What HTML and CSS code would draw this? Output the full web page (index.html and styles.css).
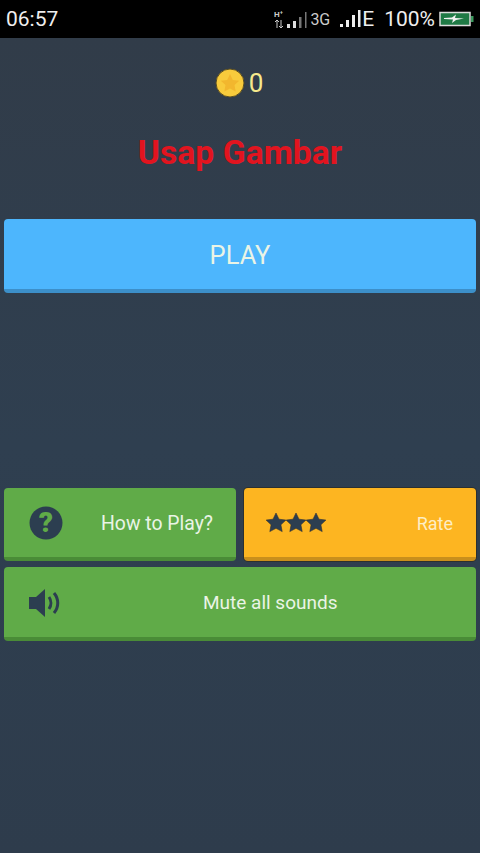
FILE: index.html
```html
<!DOCTYPE html>
<html lang="en">
<head>
  <meta charset="UTF-8">
  <meta name="viewport" content="width=device-width, initial-scale=1.0">
  <title>Usap Gambar</title>
  <link rel="stylesheet" href="styles.css">
</head>
<body>
  <div class="status-bar">
    <span class="clock">06:57</span>
    <div class="status-icons">
      <svg class="sim-signal" width="35" height="20" viewBox="0 0 35 20">
        <text x="0" y="8" class="tiny">H⁺</text>
        <path d="M3 11v8M1 13l2-2 2 2M7 11v8M5 17l2 2 2-2" stroke="#ccc" stroke-width="1" fill="none"/>
        <rect x="13" y="15" width="3" height="4" fill="#ddd"/>
        <rect x="19" y="12" width="3" height="7" fill="#ddd"/>
        <rect x="25" y="8" width="2.5" height="11" fill="#777"/>
        <rect x="31" y="3" width="1.5" height="16" fill="#777"/>
      </svg>
      <span class="net-label net-3g">3G</span>
      <svg class="sim-signal-two" width="22" height="20" viewBox="0 0 22 20">
        <rect x="1" y="15" width="3" height="3" fill="#eee"/>
        <rect x="7" y="11" width="3" height="7" fill="#eee"/>
        <rect x="13" y="6" width="3" height="12" fill="#eee"/>
        <rect x="19" y="1" width="2.500" height="17" fill="#eee"/>
      </svg>
      <span class="net-label net-e">E</span>
      <span class="battery-pct">100%</span>
      <svg class="battery" width="35" height="16" viewBox="0 0 35 16">
        <rect x="1" y="1.5" width="30" height="13" fill="#1f7a45" stroke="#ddd" stroke-width="1.5"/>
        <rect x="32" y="5" width="2.5" height="6" fill="#3c9a5f"/>
        <path d="M5 7l8-.5 4-3-1 3.500 9 .5-8 1.500-4 3 1-3.500-9-.5z" fill="#f2f2f2"/>
      </svg>
    </div>
  </div>

  <div class="main">
    <div class="coins">
      <svg class="coin" width="30" height="30" viewBox="0 0 30 30">
        <circle cx="15" cy="15" r="14" fill="#f8cb3c" stroke="#5c4f22" stroke-width="1"/>
        <path d="M15 6l2.800 5.900 6.400.8-4.700 4.400 1.200 6.400-5.700-3.100-5.700 3.100 1.200-6.400-4.700-4.400 6.400-.8z" fill="#f2b72e"/>
      </svg>
      <span class="coin-count">0</span>
    </div>

    <h1 class="title">Usap Gambar</h1>

    <button class="btn btn-blue btn-play">PLAY</button>

    <div class="menu">
      <button class="btn btn-green menu-btn">
        <svg width="36" height="36" viewBox="0 0 36 36">
          <circle cx="18" cy="18" r="16.500" fill="#2c3e50"/>
          <text x="18" y="27" text-anchor="middle" class="help-mark">?</text>
        </svg>
        <span class="help-label">How to Play?</span>
      </button>
      <button class="btn btn-yellow menu-btn">
        <svg width="62" height="22" viewBox="0 0 62 22">
          <path id="rate-star" d="M11 1l3 6.200 6.900.9-5 4.700 1.300 6.800-6.200-3.300-6.200 3.300 1.300-6.800-5-4.700 6.900-.9z" fill="#2c3e50" stroke="#333" stroke-width="0.600"/>
          <use href="#rate-star" x="20"/>
          <use href="#rate-star" x="40"/>
        </svg>
        <span class="rate-label">Rate</span>
      </button>
      <button class="btn btn-green menu-btn menu-wide">
        <svg width="34" height="32" viewBox="0 0 34 32">
          <path d="M1 10h7l9-8v28l-9-8H1z" fill="#2c3e50"/>
          <path d="M21 10c2.500 3.500 2.500 8.500 0 12M26 6c5 6 5 14 0 20" fill="none" stroke="#2c3e50" stroke-width="3"/>
        </svg>
        <span class="mute-label">Mute all sounds</span>
      </button>
    </div>
  </div>
</body>
</html>
```

FILE: styles.css
```css
* {
  box-sizing: border-box;
}
html, body {
  height: 100%;
}
body {
  margin: 0;
  background: #2f3d4c;
  font-family: Roboto, Arial, sans-serif;
  display: flex;
  flex-direction: column;
}
.status-bar {
  height: 38px;
  background: #000;
  color: #eee;
  display: flex;
  align-items: center;
  justify-content: space-between;
  padding: 0 6px;
  flex-shrink: 0;
}
.clock {
  font-size: 21px;
}
.status-icons {
  display: flex;
  align-items: center;
}
.tiny {
  font-size: 8px;
  font-weight: bold;
  fill: #ccc;
}
.net-label {
  font-size: 16px;
}
.net-3g {
  margin: 0 9px 0 1px;
  color: #ccc;
}
.net-e {
  font-size: 21px;
  margin-left: 1px;
  margin-right: 10px;
}
.battery-pct {
  font-size: 21px;
  margin-right: 4px;
}
.main {
  flex: 1;
  background: linear-gradient(#313c49, #2f3f50 50%, #2e3c4c);
  padding: 30px 4px 0;
  display: flex;
  flex-direction: column;
}
.coins {
  display: flex;
  align-items: center;
  justify-content: center;
  gap: 4px;
  height: 30px;
  padding-right: 2px;
}
.coin-count {
  font-size: 26px;
  color: #f6e98c;
}
.title {
  margin: 29px 0 0;
  height: 52px;
  line-height: 52px;
  font-size: 33.7px;
  font-weight: bold;
  text-align: center;
  color: #e2141f;
}
.btn {
  border: none;
  border-bottom: 4px solid;
  border-radius: 4px;
  color: #eaf4e6;
  font-family: inherit;
  padding: 1px 0 0;
}
.btn-play {
  margin-top: 40px;
  height: 74px;
  font-size: 25.500px;
}
.btn-blue {
  background: #4db6fd;
  border-color: #3c8fc9;
}
.btn-green {
  background: #60ab48;
  border-color: #4a8c37;
}
.btn-yellow {
  background: #fdb521;
  border-color: #c98f1c;
  box-shadow: 0 0 0 1px rgba(40, 30, 10, 0.45);
  color: #fdeec4;
}
.menu {
  margin-top: 195px;
  display: grid;
  grid-template-columns: 232px 232px;
  column-gap: 8px;
  row-gap: 6px;
}
.menu-btn {
  height: 73px;
  font-size: 19.400px;
  display: flex;
  align-items: center;
  justify-content: space-between;
  padding: 1px 23px 0 24px;
}
.btn-yellow.menu-btn {
  padding-left: 21px;
  font-size: 18px;
}
.menu-wide {
  grid-column: 1 / 3;
  height: 74px;
  justify-content: flex-start;
}
.help-mark {
  font-size: 28px;
  font-weight: 900;
  fill: #60ab48;
  font-family: Roboto, Arial, sans-serif;
}
.mute-label {
  font-size: 19px;
  margin-left: 141px;
}
```
